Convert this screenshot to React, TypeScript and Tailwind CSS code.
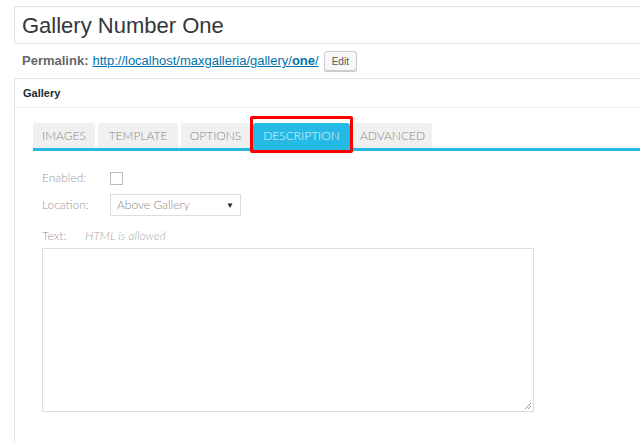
import React from 'react';

const tabs = [
    { label: 'IMAGES', w: 'w-[62px]' },
    { label: 'TEMPLATE', w: 'w-[80px]' },
    { label: 'OPTIONS', w: 'w-[69px]' },
    { label: 'DESCRIPTION', w: 'w-[97px]', active: true },
    { label: 'ADVANCED', w: 'w-[79px]' },
];

export default function App() {
    return (
        <div className="w-[640px] h-[443px] overflow-hidden bg-white font-['Liberation_Sans',Arial,sans-serif]">
            {/* Title */}
            <div className="pt-[6px] pl-[14px]">
                <div className="h-[38px] border border-r-0 border-[#e1e1e1] flex items-center pl-[7px] text-[22px] text-[#32373c]">
                    Gallery Number One
                </div>
            </div>

            {/* Permalink */}
            <div className="h-[34px] pl-[22px] flex items-center text-[13px] text-[#666]">
                <span className="font-bold mr-[4px]">Permalink:</span>
                <a className="text-[#0073aa] underline">
                    http://localhost/maxgalleria/gallery/<span className="font-bold">one</span>/
                </a>
                <button className="ml-[5px] h-[20px] px-[7px] border border-[#ccc] rounded-[3px] bg-[#f7f7f7] text-[10px] text-[#555] shadow-[0_1px_0_#ccc]">
                    Edit
                </button>
            </div>

            {/* Gallery box */}
            <div className="ml-[14px] border-l border-t border-[#e5e5e5] h-[400px]">
                <div className="h-[29px] border-b border-[#eee] flex items-center pl-[8px] text-[11px] font-bold text-[#23282d]">
                    Gallery
                </div>

                <div className="pt-[15px] pl-[18px] font-['Lato',sans-serif] font-light">
                    <div className="flex items-end gap-[3px] border-b-[3px] border-[#25b9e6] h-[28px]">
                        {tabs.map((t) => (
                            <div key={t.label} className={`relative ${t.w} h-[25px] rounded-t-[3px] flex items-center justify-center text-[12px] ${t.active ? 'bg-[#25b9e6] text-[#e0f6fd]' : 'bg-[#f0f0f0] text-[#8a8a8a]'}`}>
                                {t.label}
                                {t.active && (
                                    <div className="absolute -left-[3px] -right-[3px] -top-[7px] -bottom-[5px] border-[3px] border-[#ff0000] rounded-[2px]" />
                                )}
                            </div>
                        ))}
                    </div>

                    <div className="pl-[9px] pt-[20px] text-[12px] text-[#9a9a9a]">
                        <div className="flex items-center h-[14px]">
                            <span className="w-[68px]">Enabled:</span>
                            <span className="w-[13px] h-[13px] border border-[#bbb] bg-white" />
                        </div>
                        <div className="flex items-center mt-[9px]">
                            <span className="w-[68px]">Location:</span>
                            <div className="w-[131px] h-[22px] border border-[#ddd] flex items-center justify-between px-[6px] text-[#888]">
                                <span>Above Gallery</span>
                                <span className="text-[8px] text-[#222]">▼</span>
                            </div>
                        </div>
                        <div className="flex items-center mt-[13px] h-[14px]">
                            <span className="w-[43px]">Text:</span>
                            <span className="italic text-[#aaa]">HTML is allowed</span>
                        </div>
                        <div className="relative mt-[5px] w-[492px] h-[164px] border border-[#ddd]">
                            <svg className="absolute right-[1px] bottom-[1px]" width="8" height="8" viewBox="0 0 8 8">
                                <path d="M7 1 L1 7 M7 4 L4 7" stroke="#999" strokeWidth="1" />
                            </svg>
                        </div>
                    </div>
                </div>
            </div>
        </div>
    );
}
